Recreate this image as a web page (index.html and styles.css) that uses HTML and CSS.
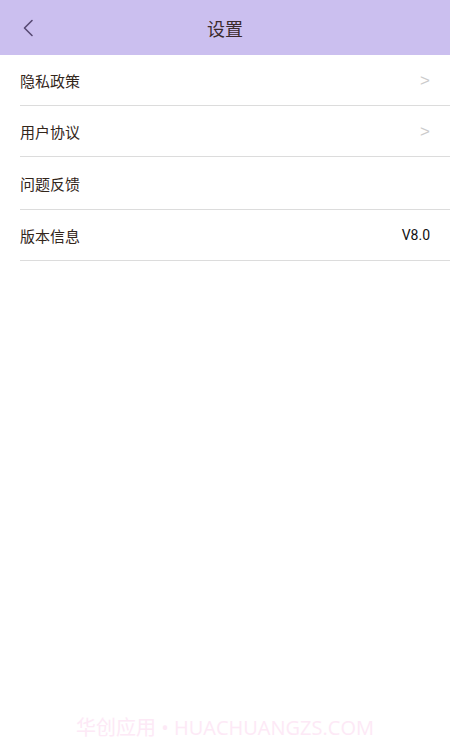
FILE: index.html
```html
<!DOCTYPE html>
<html lang="zh">
<head>
<meta charset="utf-8">
<link rel="stylesheet" href="styles.css">
</head>
<body>
<div class="page">
  <header class="bar">
    <svg class="back" width="12" height="18" viewBox="0 0 12 18"><path d="M10 1.5 L2.5 9 L10 16.5" fill="none" stroke="#574a73" stroke-width="1.6" stroke-linecap="round" stroke-linejoin="round"/></svg>
    <h1 class="title">设置</h1>
  </header>
  <ul class="list">
    <li class="row"><span class="label">隐私政策</span><span class="arrow">&gt;</span></li>
    <li class="row"><span class="label">用户协议</span><span class="arrow">&gt;</span></li>
    <li class="row row-tall"><span class="label">问题反馈</span></li>
    <li class="row"><span class="label">版本信息</span><span class="value">V8.0</span></li>
  </ul>
  <div class="spacer"></div>
  <div class="mark">华创应用 • HUACHUANGZS.COM</div>
</div>
</body>
</html>
```
FILE: styles.css
```css
html, body { margin: 0; padding: 0; background: #fff; }
body { font-family: "Noto Sans CJK SC", "Noto Sans", sans-serif; }
.page { width: 450px; height: 750px; display: flex; flex-direction: column; }
.bar { position: relative; height: 55px; background: #cbbfef; display: flex; align-items: center; justify-content: center; flex-shrink: 0; }
.back { position: absolute; left: 22px; top: 19px; }
.title { margin: 0; font-size: 18px; font-weight: 400; color: #3b2a2c; letter-spacing: 0; }
.list { list-style: none; margin: 0; padding: 0 0 0 20px; }
.row { height: 50px; border-bottom: 1px solid #dcdcdc; display: flex; align-items: center; justify-content: space-between; padding-right: 20px; }
.row-tall { height: 52px; }
.label { font-size: 15px; color: #33261b; }
.arrow { font-family: "Liberation Sans", Arial, sans-serif; font-size: 17px; color: #cbcbcb; margin-top: 2px; }
.value { font-family: Roboto, "Liberation Sans", sans-serif; font-size: 14px; color: #111; }
.spacer { flex: 1; }
.mark { text-align: center; font-size: 20px; color: #fde9f6; padding-bottom: 9px; line-height: 26px; font-family: "Open Sans", "Noto Sans CJK SC", sans-serif; }
```
